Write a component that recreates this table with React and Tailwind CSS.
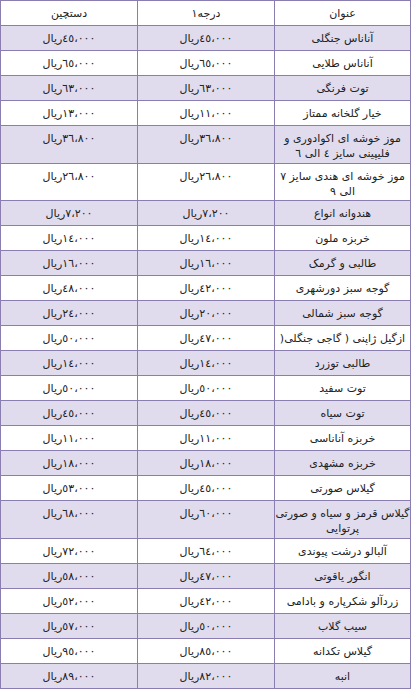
import React from 'react';

const rows = [
    { title: 'آناناس جنگلی', grade: '٤٥،٠٠٠', pick: '٤٥،٠٠٠' },
    { title: 'آناناس طلایی', grade: '٦٥،٠٠٠', pick: '٦٥،٠٠٠' },
    { title: 'توت فرنگی', grade: '٦٣،٠٠٠', pick: '٦٣،٠٠٠' },
    { title: 'خیار گلخانه ممتاز', grade: '١١،٠٠٠', pick: '١٣،٠٠٠' },
    { title: ['موز خوشه ای اکوادوری و', 'فلیپینی سایز ٤ الی ٦'], grade: '٣٦،٨٠٠', pick: '٣٦،٨٠٠' },
    { title: ['موز خوشه ای هندی سایز ٧', 'الی ٩'], grade: '٢٦،٨٠٠', pick: '٢٦،٨٠٠' },
    { title: 'هندوانه انواع', grade: '٧،٢٠٠', pick: '٧،٢٠٠' },
    { title: 'خربزه ملون', grade: '١٤،٠٠٠', pick: '١٤،٠٠٠' },
    { title: 'طالبی و گرمک', grade: '١٦،٠٠٠', pick: '١٦،٠٠٠' },
    { title: 'گوجه سبز دورشهری', grade: '٤٢،٠٠٠', pick: '٤٨،٠٠٠' },
    { title: 'گوجه سبز شمالی', grade: '٢٠،٠٠٠', pick: '٢٤،٠٠٠' },
    { title: 'ازگیل ژاپنی ( گاجی جنگلی(', grade: '٤٧،٠٠٠', pick: '٥٠،٠٠٠' },
    { title: 'طالبی توزرد', grade: '١٤،٠٠٠', pick: '١٤،٠٠٠' },
    { title: 'توت سفید', grade: '٥٠،٠٠٠', pick: '٥٠،٠٠٠' },
    { title: 'توت سیاه', grade: '٤٥،٠٠٠', pick: '٤٥،٠٠٠' },
    { title: 'خربزه آناناسی', grade: '١١،٠٠٠', pick: '١١،٠٠٠' },
    { title: 'خربزه مشهدی', grade: '١٨،٠٠٠', pick: '١٨،٠٠٠' },
    { title: 'گیلاس صورتی', grade: '٤٥،٠٠٠', pick: '٥٣،٠٠٠' },
    { title: ['گیلاس قرمز و سیاه و صورتی', 'پرتوایی'], grade: '٦٠،٠٠٠', pick: '٦٨،٠٠٠' },
    { title: 'آلبالو درشت پیوندی', grade: '٦٤،٠٠٠', pick: '٧٢،٠٠٠' },
    { title: 'انگور یاقوتی', grade: '٤٧،٠٠٠', pick: '٥٨،٠٠٠' },
    { title: 'زردآلو شکرپاره و بادامی', grade: '٤٢،٠٠٠', pick: '٥٢،٠٠٠' },
    { title: 'سیب گلاب', grade: '٥٠،٠٠٠', pick: '٥٧،٠٠٠' },
    { title: 'گیلاس تکدانه', grade: '٨٥،٠٠٠', pick: '٩٥،٠٠٠' },
    { title: 'انبه', grade: '٨٢،٠٠٠', pick: '٨٩،٠٠٠' },
];

const cell = 'flex justify-center text-center pt-[5px] pb-[1.5px] leading-[15px]';

const Row = ({ bg, children }) => (
    <div className={`grid grid-cols-[136px_137px_1fr] min-h-[25px] border-b border-[#8a7db0] ${bg}`}>
        {children}
    </div>
);

export default function App() {
    return (
        <div
            dir="rtl"
            className="w-[411px] border-t border-r border-l border-[#8a7db0] bg-white text-[11px] text-[#222]"
            style={{ fontFamily: '"DejaVu Sans", sans-serif' }}
        >
            <Row bg="bg-white">
                <div className={`${cell} border-l border-[#8a7db0]`}>عنوان</div>
                <div className={`${cell} border-l border-[#8a7db0]`}>درجه١</div>
                <div className={cell}>دستچین</div>
            </Row>
            {rows.map((r, i) => (
                <Row key={i} bg={i % 2 === 0 ? 'bg-[#e0dcee]' : 'bg-white'}>
                    <div className={`${cell} border-l border-[#8a7db0] overflow-hidden`}>
                        {Array.isArray(r.title) ? (
                            <div className="flex flex-col items-center">
                                {r.title.map((t, j) => (
                                    <span key={j} className="whitespace-nowrap tracking-[-0.2px]">
                                        {t}
                                    </span>
                                ))}
                            </div>
                        ) : (
                            <span className="whitespace-nowrap">{r.title}</span>
                        )}
                    </div>
                    <div className={`${cell} border-l border-[#8a7db0]`}>{r.grade}ریال</div>
                    <div className={cell}>{r.pick}ریال</div>
                </Row>
            ))}
        </div>
    );
}
